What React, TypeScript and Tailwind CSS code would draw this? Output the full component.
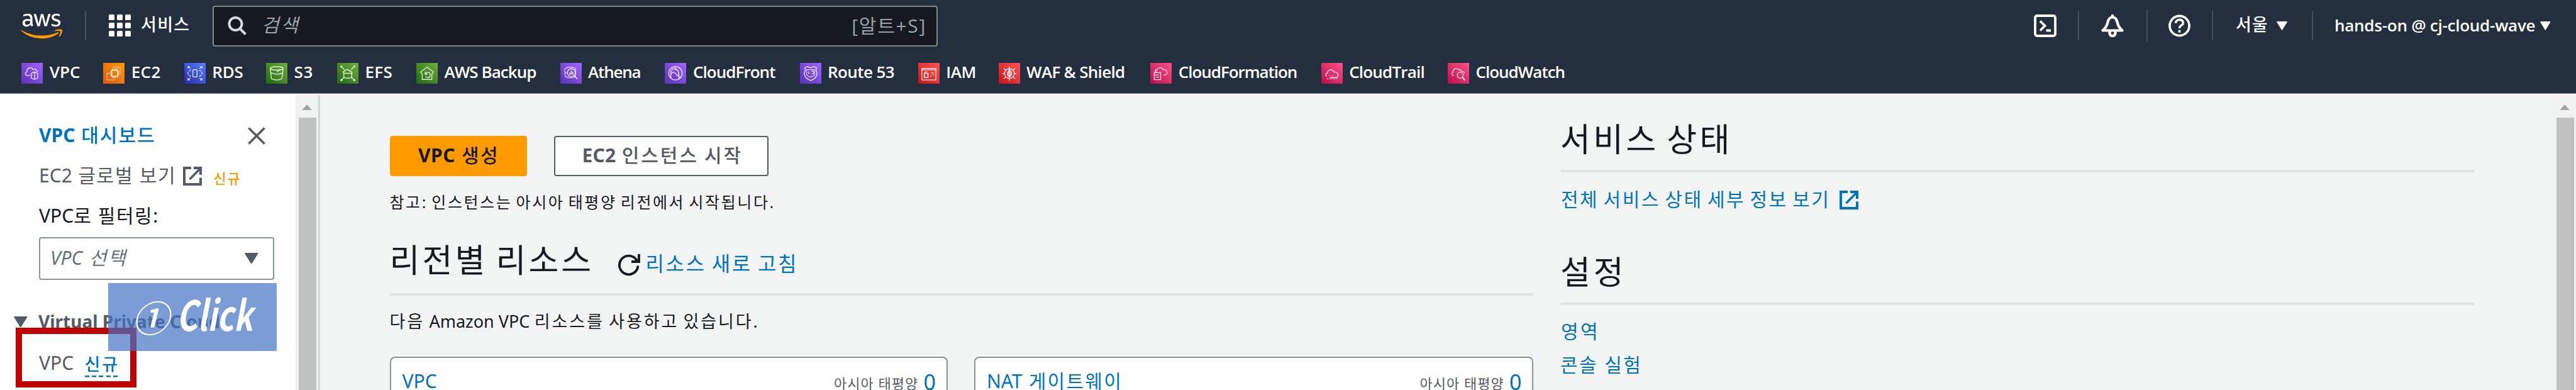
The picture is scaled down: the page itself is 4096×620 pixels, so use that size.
import type { ReactNode } from "react";
import { FaAws } from "react-icons/fa";

/* ---------- small drawings ---------- */

function AwsLogo() {
  return (
    <div className="relative mt-[15px] ml-[33px] h-[53px] w-[66px] shrink-0">
      <FaAws className="absolute inset-0 h-[53px] w-[66px] text-white [clip-path:inset(0_0_42%_0)]" />
      <FaAws className="absolute inset-0 h-[53px] w-[66px] text-[#ff9900] [clip-path:inset(58%_0_0_0)]" />
    </div>
  );
}

function GridIcon() {
  const cells = [0, 13, 26];
  return (
    <svg viewBox="0 0 35 35" className="mt-[23px] ml-9 h-[35px] w-[35px] shrink-0" fill="#fff">
      {cells.map((y) => cells.map((x) => <rect key={`${x}-${y}`} x={x} y={y} width="9" height="9" rx="1.6" />))}
    </svg>
  );
}

function External({ className }: { className: string }) {
  return (
    <svg viewBox="0 0 30 30" className={className} fill="none" stroke="currentColor" strokeWidth="4">
      <path d="M13 2H2V28H28V17.500" />
      <path d="M10.500 20L27 3.500" strokeWidth="3.600" />
      <path d="M17 2H28V13" />
    </svg>
  );
}

function Down({ className }: { className: string }) {
  return (
    <svg viewBox="0 0 22 18" preserveAspectRatio="none" className={className} fill="currentColor">
      <path d="M1 0H21Q22.4 0.3 21.6 1.6L12 17Q11 18.4 10 17L0.4 1.6Q-0.4 0.3 1 0Z" />
    </svg>
  );
}

function Divider({ className }: { className: string }) {
  return <div className={`w-[2px] shrink-0 bg-[#454e5b] ${className}`} />;
}

/* ---------- favourites ---------- */

const cloud = "M10 20.5H8.5C6.300 20 6 16 8.500 15.200C8 9.500 15 7 18 11.500C20 10 22.500 11.500 22.500 13.800C25 14 27 15 27.500 17";

type Fav = { name: string; box: string; bg: string; text: string; art: ReactNode };

const purple = "bg-linear-to-tr from-[#5a30b5] to-[#a166ff]";
const green = "bg-linear-to-tr from-[#1f6a10] to-[#6cae3e]";
const red = "bg-linear-to-tr from-[#c0101c] to-[#ff5252]";
const pink = "bg-linear-to-tr from-[#b5084d] to-[#ff4f8b]";

const favs: Fav[] = [
  {
    name: "VPC", box: "w-[130px]", bg: purple, text: "",
    art: <><path d="M15 20.500H9.500C5.500 20 5.800 15 9 14.500C8.500 8 16.500 5.500 19.500 11C22 9 24.500 11 24.500 12.500L27 14.500" /><path d="M16.500 17Q21.500 13.500 26.500 17V25Q21.500 28.500 16.500 25ZM21.500 15V27.500" /></>,
  },
  {
    name: "EC2", box: "w-[128.500px]", bg: "bg-linear-to-tr from-[#d65a17] to-[#ff9900]", text: "tracking-[0.3px]",
    art: <><rect x="14" y="12" width="10" height="10" strokeWidth="1.800" /><path d="M16 12V9.500M19 12V9.500M22 12V9.500M14 15H11.500M14 19H11.500M24 15H26.500M24 19H26.500M16 22V24.500M20 22V24.500" /><path d="M16 7H28V19H26.500M12 17H6V28H18V24" strokeDasharray="2.500 1" opacity=".75" /></>,
  },
  {
    name: "RDS", box: "w-[130.200px]", bg: "bg-linear-to-tr from-[#2e27ad] to-[#527fff]", text: "tracking-[-0.2px]",
    art: <><rect x="14" y="11" width="7" height="12" rx="2" /><path d="M11 12Q6 13 6 17T11 22M24 12Q29 13 29 17T24 22" strokeDasharray="4 1.500" /><path d="M6 9V6H9M6.500 6.500L10 9.500M26 6H29V9M28.500 6.500L25 9.500M6 25V28H9M6.500 27.500L10 24.500M29 25V28H26M28.500 27.500L25 24.500" /></>,
  },
  {
    name: "S3", box: "w-[113px]", bg: green, text: "tracking-[0.8px]",
    art: <><ellipse cx="17.500" cy="9" rx="10.500" ry="2.800" /><path d="M7 9L8.800 26Q17.500 30 26 26L28 9M8 16Q17.500 20.500 27 16.500M18 15L24 10.500" /></>,
  },
  {
    name: "EFS", box: "w-[126px]", bg: green, text: "tracking-[0.3px]",
    art: <><path d="M11 17C9 16 10 13 12.500 13.500C14 10 20 10.500 20.500 13.500C24 13 25.500 16.500 24 18M11 17H24V24Q17.500 26 11 24Z" /><path d="M7 6L12 11M28 6L23 11M7 28L12 23M28 28L23 23" /><path d="M7 6h.1M28 6h.1M7 28h.1M28 28h.1" strokeWidth="3.500" strokeLinecap="round" /></>,
  },
  {
    name: "AWS Backup", box: "w-[228.600px]", bg: green, text: "tracking-[-0.95px]",
    art: <><path d="M17.500 7L28 15L25.500 18V27H9.500V18L7 15Z" /><path d="M14.500 14.500V18.500H18M15 18A4.200 4.200 0 1 1 15.500 22.500" /></>,
  },
  {
    name: "Athena", box: "w-[166.900px]", bg: purple, text: "tracking-[-1.2px]",
    art: <><path d="M7 10Q16 4 25 9V22Q16 27 8 22ZM7 15Q10 17 12 17" opacity=".8" /><circle cx="18" cy="16" r="6.500" /><path d="M15.500 19V16M18 19V13M20.500 19V15M23 21L28 26.500" strokeWidth="1.800" /></>,
  },
  {
    name: "CloudFront", box: "w-[214.100px]", bg: purple, text: "tracking-[-0.95px]",
    art: <><circle cx="17.500" cy="17" r="11" /><path d="M10 25V14L14 9M15 9Q22 10 23 18T22 26M10 18Q15 12 20 20L26 24M17 6V12" /></>,
  },
  {
    name: "Route 53", box: "w-[188.100px]", bg: purple, text: "tracking-[-0.6px]",
    art: <><path d="M8 8L12 6L17.500 8L23 6L27 8Q25.500 12 28 17Q28 25 17.500 29Q7 25 7 17Q9.500 12 8 8Z" /><path d="M11 11H24V20Q17.500 26 11 20ZM14 14V17H16.500M19 13.500H22V18H19" strokeWidth="1.100" /></>,
  },
  {
    name: "IAM", box: "w-[127.900px]", bg: red, text: "tracking-[-0.4px]",
    art: <><path d="M6 9H29V28H6ZM6 11.500H29" /><rect x="10" y="17" width="6" height="7" strokeWidth="1.800" /><path d="M11.500 17V14.500H15M21 16H25.500M21 19V24M24.500 17V21" opacity=".8" /></>,
  },
  {
    name: "WAF & Shield", box: "w-[241.800px]", bg: red, text: "tracking-[-0.7px]",
    art: <><circle cx="17.500" cy="17.500" r="8" /><path d="M17.500 6V29M6 17.500H10M25 17.500H29M8 9L12 12M27 9L23 12M8 26L12 23M27 26L23 23" strokeDasharray="5 1" /><path d="M17.500 11Q22 15 21 19T17.500 23Q13 21 14.500 16Z" fill="#fff" fillOpacity=".5" /></>,
  },
  {
    name: "CloudFormation", box: "w-[271.300px]", bg: pink, text: "tracking-[-1.05px]",
    art: <><path d="M11 13C11 7 19 6 21 11C24 10 28.500 13 27.500 17Q26.500 20 22 20" opacity=".85" /><path d="M7 13H10M6.500 16H17V27.500H6.500ZM6.500 20H14M9 23.500H14M9 10V16" /></>,
  },
  {
    name: "CloudTrail", box: "w-[201.300px]", bg: pink, text: "tracking-[-0.8px]",
    art: <><path d="M9 22C6.500 21 6.500 17 10 16.500C10.500 10.500 18.500 9.500 20.500 15C24 14 27.500 17 27.500 20Q27.500 23 25 24H14" /><path d="M9 26H26M12 20.500h2M17 20.500h2" strokeDasharray="2 1" opacity=".7" /></>,
  },
  {
    name: "CloudWatch", box: "w-[200px]", bg: pink, text: "tracking-[-1px]",
    art: <><path d={cloud} opacity=".9" /><circle cx="20.500" cy="20" r="4.800" /><path d="M24 23.500L28 28.500" strokeWidth="2.200" /></>,
  },
];

function Favourite({ fav }: { fav: Fav }) {
  return (
    <div className={`flex shrink-0 items-start ${fav.box}`}>
      <div className={`h-[33px] w-[34px] shrink-0 ${fav.bg}`}>
        <svg viewBox="0 0 35 34" className="h-[33px] w-[34px]" fill="none" stroke="#fff" strokeOpacity=".85" strokeWidth="1.400">
          {fav.art}
        </svg>
      </div>
      <span className={`mt-px ml-[10.5px] text-[26px] leading-none font-semibold whitespace-nowrap ${fav.text}`}>{fav.name}</span>
    </div>
  );
}

/* ---------- header ---------- */

function Header() {
  return (
    <header className="h-[149px] shrink-0 border-b border-[#6f7985] bg-[#232f3e] font-['Open_Sans','Noto_Sans_CJK_KR',sans-serif] text-white">
      <div className="flex h-[82px] items-start whitespace-nowrap">
        <AwsLogo />
        <Divider className="mt-[17px] ml-9 h-[47px]" />
        <GridIcon />
        <span className="mt-[25px] ml-4 w-[78px] shrink-0 text-[27px] leading-none font-medium tracking-[1.3px]">서비스</span>
        <div className="mt-[8.5px] ml-9 flex h-[65px] w-[1153px] shrink-0 items-start rounded-[4px] border-2 border-[#7f8c8d] bg-[#16191f] text-[30px] leading-none text-[#95a5a6]">
          <svg viewBox="0 0 30 30" className="mt-[15.500px] ml-[22px] h-[30px] w-[30px] shrink-0" fill="none" stroke="#d5dbdb" strokeWidth="4">
            <circle cx="12.500" cy="12" r="10" />
            <path d="M19.500 19.500L28.500 28.500" />
          </svg>
          <span className="mt-[14px] ml-[24px] tracking-[3px] italic">검색</span>
          <span className="mt-[15.5px] mr-[16px] ml-auto tracking-[1.7px]">[알트+S]</span>
        </div>

        <svg viewBox="0 0 36 36" className="mt-[23px] ml-[1743px] h-9 w-9 shrink-0" fill="none" stroke="#fff" strokeWidth="3.800">
          <rect x="2" y="2" width="32" height="32" rx="3" />
          <path d="M10 10.500L17.500 18L10 25.500M19.500 25.500H27" />
        </svg>
        <Divider className="mt-[17px] ml-[33.5px] h-[47px]" />
        <svg viewBox="0 0 36 36" className="mt-[23px] ml-[35.5px] h-9 w-9 shrink-0" fill="none" stroke="#fff" strokeWidth="4.200" strokeLinejoin="round">
          <path d="M2.500 25.500H33.500C28.500 21.500 26.500 17 25.500 12C24.500 7.500 22 4.500 18 4.500C14 4.500 11.500 7.500 10.500 12C9.500 17 7.500 21.500 2.500 25.500Z" />
          <path d="M18 0V4M13.500 26V30Q14 34 18 34T22.500 30V26" />
        </svg>
        <Divider className="mt-[15px] ml-[35.5px] h-[51px]" />
        <svg viewBox="0 0 36 36" className="mt-[23px] ml-[33.5px] h-[36px] w-[35px] shrink-0" fill="none" stroke="#fff" strokeWidth="3.800">
          <circle cx="18" cy="18" r="16" />
          <path d="M12 13.500C12 6.500 24 6.500 24 13C24 17.500 18 17 18 22" />
          <path d="M18 25V29" />
        </svg>
        <Divider className="mt-[17px] ml-[34px] h-[47px]" />
        <span className="mt-[25px] ml-9 w-[52px] shrink-0 text-[27px] leading-none font-medium tracking-[1px]">서울</span>
        <Down className="mt-[34px] ml-[13px] h-[14px] w-[17px] shrink-0" />
        <Divider className="mt-[17px] ml-[39px] h-[47px]" />
        <span className="mt-[27px] ml-[34px] w-[316px] shrink-0 text-[26px] leading-none font-semibold tracking-[-0.25px]">hands-on @ cj-cloud-wave</span>
        <Down className="mt-[34px] ml-[11px] h-[14px] w-[16.5px] shrink-0" />
      </div>
      <nav className="flex pt-[18px] pl-[34.3px]">
        {favs.map((f) => (
          <Favourite key={f.name} fav={f} />
        ))}
      </nav>
    </header>
  );
}

/* ---------- scroll bar ---------- */

function ScrollBar({ thumb }: { thumb: string }) {
  return (
    <div className="flex w-9 shrink-0 flex-col items-start bg-[#f1f1f1]">
      <svg viewBox="0 0 16 9" className="mt-[14.5px] ml-[10px] h-[9.500px] w-4 shrink-0" fill="#a3a3a3">
        <path d="M8 0L16 9H0Z" />
      </svg>
      <div className={`mt-3 ml-[4.5px] grow bg-[#c1c1c1] ${thumb}`} />
    </div>
  );
}

/* ---------- side navigation ---------- */

function Sidebar() {
  return (
    <aside className="relative flex w-[470px] shrink-0 flex-col bg-white pl-[62px] text-[30px] leading-none whitespace-nowrap text-[#545b64]">
      <div className="mt-[49px] flex h-[30px] shrink-0 items-start">
        <span className="w-[332px] font-medium tracking-[2px] text-[#0073bb]">
          <span className="font-bold tracking-normal">VPC</span> 대시보드
        </span>
        <svg viewBox="0 0 28 28" className="mt-[2px] h-7 w-7" fill="none" stroke="currentColor" strokeWidth="3.600">
          <path d="M1.500 1.500L26.500 26.500M26.500 1.500L1.500 26.500" />
        </svg>
      </div>
      <div className="mt-[34px] flex h-[30px] shrink-0 items-start">
        <span className="w-[228.500px] tracking-[1.7px]">
          <span className="tracking-normal">EC2</span> 글로벌 보기
        </span>
        <External className="mt-px h-[30px] w-[30px]" />
        <span className="mt-2 ml-[19px] text-[22px] leading-none font-medium tracking-[1.8px] text-[#ff9900]">신규</span>
      </div>
      <div className="mt-[34px] h-[30px] shrink-0 tracking-[1.6px] text-[#16191f]">
        <span className="tracking-normal">VPC</span>로 필터링:
      </div>
      <div className="mt-[18.500px] flex h-[68px] w-[374px] shrink-0 items-start rounded-[4px] border-2 border-[#879596]">
        <span className="mt-[16.500px] ml-[16px] w-[309px] tracking-[2.7px] text-[#687078] italic">
          <span className="tracking-normal">VPC</span> 선택
        </span>
        <Down className="mt-[23.500px] h-[17.500px] w-[21.500px]" />
      </div>
      <div className="mt-[52px] -ml-[40.500px] flex h-7 shrink-0 items-start text-[28px] leading-none">
        <Down className="mt-1.5 h-[17.500px] w-[21.500px]" />
        <span className="ml-[18px] font-bold">Virtual Private Cloud</span>
      </div>
      <div className="mt-[37px] flex h-[38px] shrink-0 items-start">
        <span className="w-[72.500px]">VPC</span>
        <span className="mt-[3px] h-[35px] w-[52px] bg-[repeating-linear-gradient(90deg,#0073bb_0_7px,transparent_7px_11.200px)] bg-size-[52px_2.500px] bg-bottom bg-no-repeat text-[27px] leading-none font-medium tracking-[3px] text-[#0073bb]">
          신규
        </span>
      </div>

      {/* tutorial annotations laid over the navigation */}
      <div className="absolute top-[369.500px] left-[25px] h-[95.500px] w-[192px] border-10 border-[#c00000]" />
      <div className="absolute top-[298.500px] left-[172px] flex h-[108px] w-[267.500px] items-start bg-[#4472c4]/70 font-['Noto_Sans_CJK_KR',sans-serif] text-white italic">
        <span className="mt-[24px] ml-[38px] w-[74px] text-[58px] leading-none font-medium">①</span>
        <span className="mt-[14.500px] origin-left scale-x-[0.76] text-[66px] leading-none font-bold">Click</span>
      </div>
    </aside>
  );
}

/* ---------- main area ---------- */

function ResourceCard({ title, box }: { title: ReactNode; box: string }) {
  return (
    <div className={`flex h-[90px] shrink-0 items-start rounded-[8px] border-2 border-[#879596] bg-white pr-[16.500px] pl-[18px] text-[30px] leading-none text-[#0073bb] ${box}`}>
      <span className="mt-[22.500px] tracking-[2.3px]">{title}</span>
      <span className="mt-[29px] ml-auto w-[134px] text-[22px] leading-none tracking-[1px] text-[#545b64]">아시아 태평양</span>
      <span className="mt-[21px] ml-[8.500px] text-[34px] leading-none">0</span>
    </div>
  );
}

function Resources() {
  return (
    <section className="flex w-[1818.500px] shrink-0 flex-col">
      <div className="mt-[65px] flex h-[64.400px] shrink-0 gap-[43px] text-[30px] leading-none">
        <button className="flex w-[218px] items-start justify-center rounded-[4px] bg-[#ff9900] pt-4 pl-0.5 text-[30px] leading-none font-medium tracking-[2.3px] text-[#16191f]">
          <span><span className="font-bold tracking-[0.5px]">VPC</span> 생성</span>
        </button>
        <button className="flex w-[341.300px] items-start justify-center rounded-[4px] border-2 border-[#545b64] bg-white pt-3.5 pl-1 text-[30px] leading-none font-medium tracking-[2.9px] text-[#545b64] [word-spacing:-1.5px]">
          <span><span className="font-bold tracking-[0.3px]">EC2</span> 인스턴스 시작</span>
        </button>
      </div>
      <p className="mt-[29px] h-[25px] shrink-0 text-[25px] leading-none tracking-[2.6px] [word-spacing:-2.8px]">
        참고: 인스턴스는 아시아 태평양 리전에서 시작됩니다.
      </p>
      <div className="mt-[53px] flex h-[52px] shrink-0 items-start">
        <h2 className="w-[363.500px] text-[52px] leading-none tracking-[4.1px] [word-spacing:-4.5px]">리전별 리소스</h2>
        <svg viewBox="0 0 35 35" className="mt-[16.500px] h-[35px] w-[35px]" fill="none" stroke="#16191f" strokeWidth="3.800">
          <path d="M31.500 18.500A14.800 14.800 0 1 1 28.500 8.500L32 12" />
          <path d="M33 0V12H21" />
        </svg>
        <span className="mt-[15.500px] ml-[8.500px] text-[32px] leading-none tracking-[2.6px] text-[#0073bb] [word-spacing:-1.8px]">리소스 새로 고침</span>
      </div>
      <div className="mt-[27px] h-1 shrink-0 bg-[#e2e4e4]" />
      <p className="mt-[27px] h-[27px] shrink-0 text-[27px] leading-none tracking-[2.9px] [word-spacing:-2.5px]">
        다음 <span className="tracking-normal [word-spacing:0px]">Amazon VPC</span> 리소스를 사용하고 있습니다.
      </p>
      <div className="mt-[42.500px] flex gap-[42.500px]">
        <ResourceCard box="w-[887px]" title={<span className="tracking-normal">VPC</span>} />
        <ResourceCard box="w-[889px]" title={<><span className="tracking-normal">NAT</span> 게이트웨이</>} />
      </div>
    </section>
  );
}

function StatusColumn() {
  return (
    <section className="ml-[43px] flex w-[1452.700px] shrink-0 flex-col text-[30px] leading-none text-[#0073bb]">
      <h2 className="mt-[44px] h-[52px] shrink-0 text-[52px] leading-none tracking-[4.3px] text-[#16191f] [word-spacing:-5px]">서비스 상태</h2>
      <div className="mt-[22.500px] h-[4.300px] shrink-0 bg-[#e2e4e4]" />
      <div className="mt-[28.500px] flex h-[30px] shrink-0 items-start">
        <a className="ml-px w-[443px] tracking-[2.5px] [word-spacing:-2.9px]">전체 서비스 상태 세부 정보 보기</a>
        <External className="mt-px h-[30px] w-[30px]" />
      </div>
      <h2 className="mt-[73.500px] h-[52px] shrink-0 text-[52px] leading-none tracking-[5px] text-[#16191f]">설정</h2>
      <div className="mt-[23.300px] h-[4.300px] shrink-0 bg-[#e2e4e4]" />
      <a className="mt-[26.500px] ml-px h-[30px] shrink-0 tracking-[3.5px]">영역</a>
      <a className="mt-[23.500px] h-[30px] shrink-0 tracking-[2.4px]">콘솔 실험</a>
    </section>
  );
}

export default function App() {
  return (
    <div className="flex h-[620px] w-[4096px] flex-col overflow-hidden bg-[#f2f4f4] font-['Noto_Sans','Noto_Sans_CJK_KR',sans-serif] text-[#16191f]">
      <Header />
      <div className="flex min-h-0 grow overflow-hidden border-t-2 border-white">
        <Sidebar />
        <ScrollBar thumb="w-[28px]" />
        <div className="w-[3px] shrink-0 bg-[#d0d6d6]" />
        <main className="flex grow overflow-hidden bg-[#f2f4f4] pl-[110.500px] whitespace-nowrap">
          <Resources />
          <StatusColumn />
        </main>
        <ScrollBar thumb="w-[28px]" />
      </div>
    </div>
  );
}
